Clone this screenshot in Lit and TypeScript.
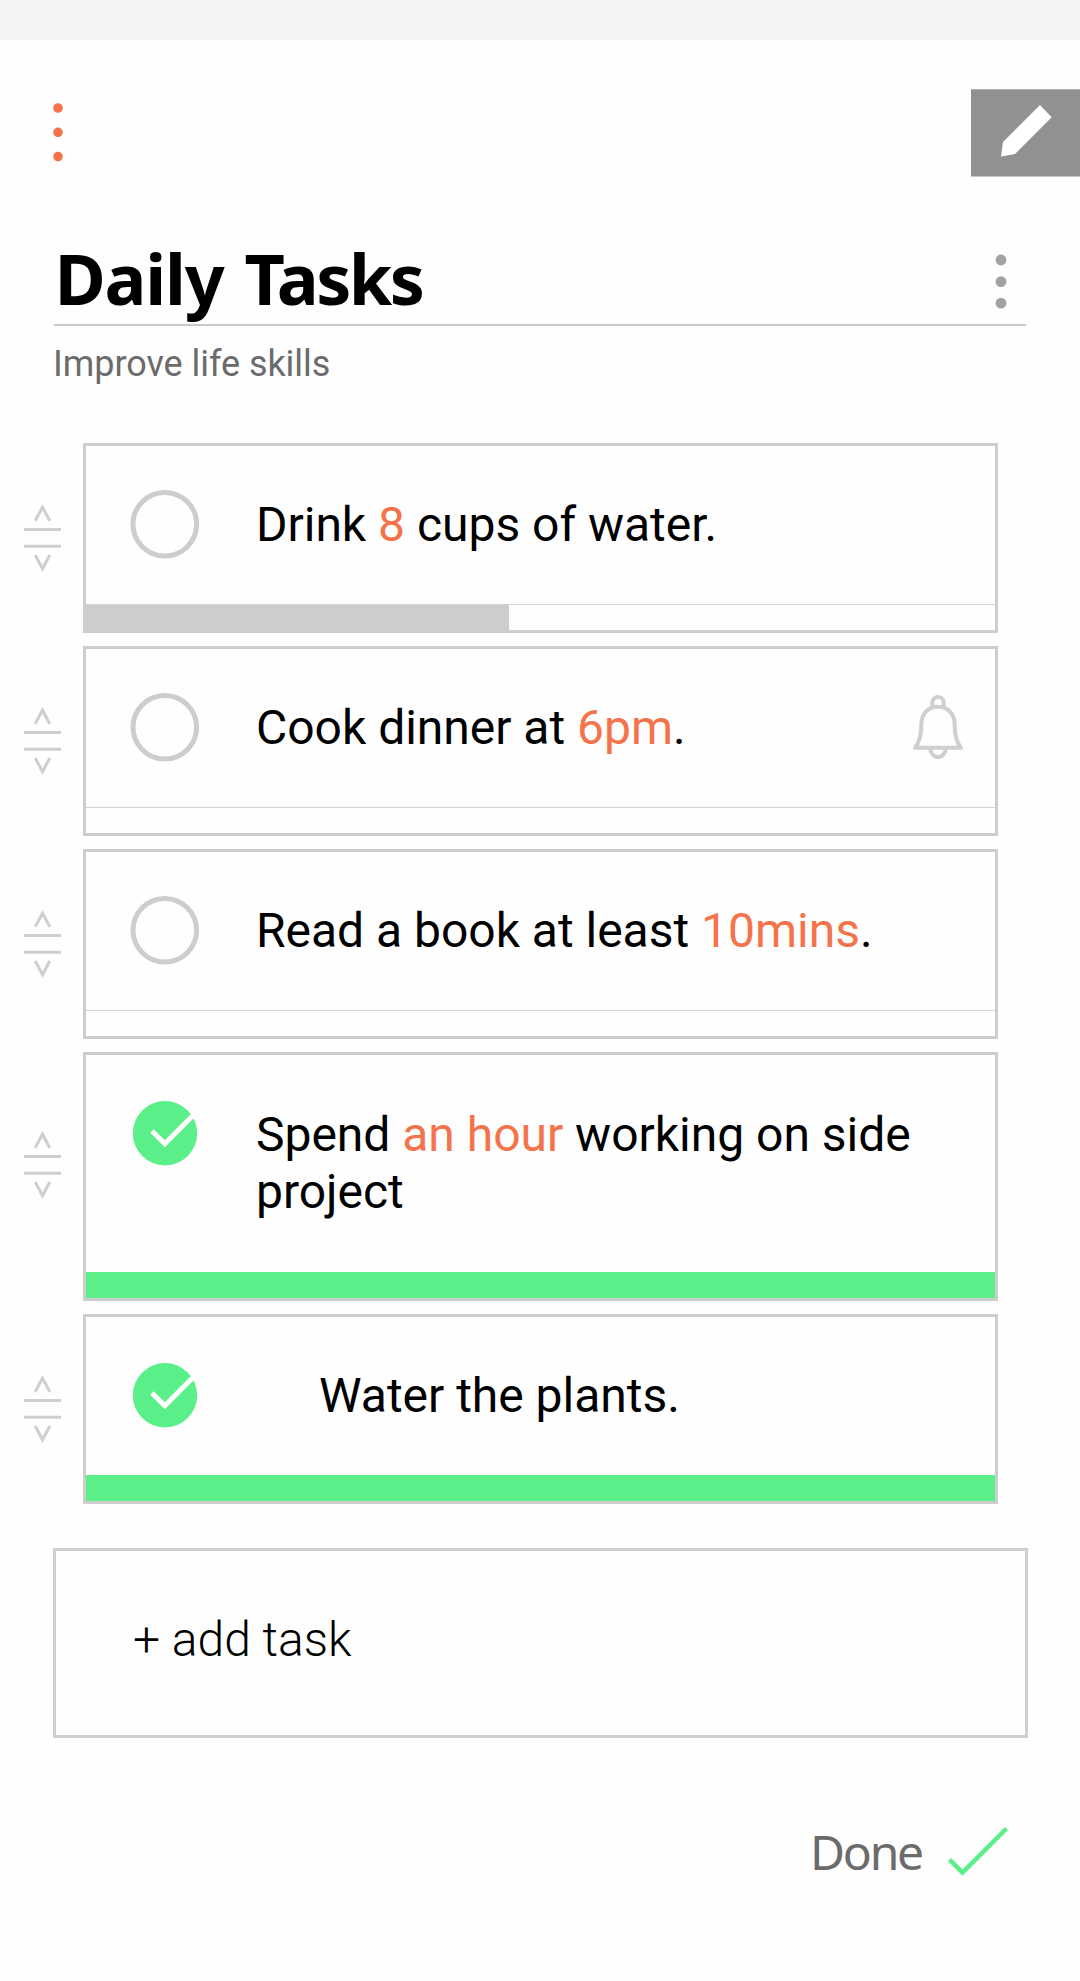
import { LitElement, html, svg, css, nothing } from "lit";
import { customElement } from "lit/decorators.js";
import { classMap } from "lit/directives/class-map.js";

interface Task {
  before: string;
  mark?: string;
  after?: string;
  second?: string;
  progress: number;
  done?: boolean;
  bell?: boolean;
  kind?: string;
}

const tasks: Task[] = [
  { before: "Drink ", mark: "8", after: " cups of water.", progress: 46.5, kind: "t1" },
  { before: "Cook dinner at ", mark: "6pm", after: ".", progress: 0, bell: true, kind: "t2" },
  { before: "Read a book at least ", mark: "10mins", after: ".", progress: 0, kind: "t3" },
  { before: "Spend ", mark: "an hour", after: " working on side", second: "project", progress: 100, done: true, kind: "t4" },
  { before: "Water the plants.", progress: 100, done: true, kind: "t5" },
];

const dots = (cls: string, r: number, step: number) => html`<svg class=${cls} width="12" height=${step * 2 + 12} viewBox="0 0 12 ${step * 2 + 12}">
  ${[0, 1, 2].map((i) => svg`<circle cx="6" cy=${6 + i * step} r=${r} fill="currentColor" />`)}
</svg>`;

const handle = html`<svg class="handle" width="38" height="70" viewBox="0 0 38 70" fill="none" stroke="#cfcfcf" stroke-width="3">
  <path d="M11.2 17.8 18.5 4.200 25.8 17.8M0 26.5H37M0 43.3H37M11.2 52 18.5 65.800 25.8 52" />
</svg>`;

const ring = html`<svg class="state" width="70" height="70" viewBox="0 0 70 70" fill="none">
  <circle cx="34.8" cy="35.2" r="31.8" stroke="#cdcdcd" stroke-width="5" />
</svg>`;

const ticked = html`<svg class="state" width="70" height="70" viewBox="0 0 70 70" fill="none">
  <circle cx="35" cy="35.2" r="32.2" fill="#5aef88" />
  <path d="M22 33 34.8 45.8 63.5 17" stroke="#fff" stroke-width="5" />
</svg>`;

const bell = html`<svg class="bell" width="52" height="68" viewBox="0 0 52 68" fill="none" stroke="#cfcfcf" stroke-width="4" stroke-linejoin="round">
  <path d="M26 14.8C16 14.8 9.400 22 9.400 32C9.400 42 8 50 3 55.700H49C44 50 42.600 42 42.600 32C42.600 22 36 14.800 26 14.800Z" />
  <path d="M20.300 16V10.700A5.700 5.700 0 0 1 31.700 10.700V16M18.300 56A7.700 9 0 0 0 33.700 56" />
</svg>`;

@customElement("app-root")
export class AppRoot extends LitElement {
  static styles = css`
    :host { display: block; }
    * { box-sizing: border-box; }
    svg { display: block; flex: none; }
    .page { height: 1981px; overflow: hidden; background: #fefefe; color: #000; font-family: Roboto, sans-serif; }
    .status { height: 40px; background: #f3f3f3; }
    .bar { display: flex; justify-content: space-between; padding: 49px 0 0 52px; height: 137px; }
    .menu { color: #f4734a; margin-top: 13.2px; }
    .edit { width: 109px; height: 88px; }
    .head { display: flex; justify-content: space-between; margin: 59px 54px 0; width: 972px; height: 90px; border-bottom: 2px solid #c8c8c8; }
    .title { display: flex; gap: 21px; margin: -2px 0 0; padding-left: 0.5px; font: 700 70px/88px "Noto Sans", sans-serif; letter-spacing: -1.2px; white-space: nowrap; }
    .tight { letter-spacing: -2.5px; }
    .more { color: #a2a2a2; margin: 18px 19px 0 0; }
    .sub { margin: 15px 0 0 53px; font-size: 36px; line-height: 46px; letter-spacing: -0.05px; color: #6b6b6b; }
    .list { display: flex; flex-direction: column; gap: 13px; margin-top: 56px; padding-left: 24px; }
    .row { display: flex; align-items: center; gap: 21px; }
    .tall .handle { margin-bottom: 23px; }
    .card { display: flex; flex-direction: column; width: 915px; height: 190px; border: 3px solid #cdcdcd; }
    .tall .card { height: 249px; }
    .body { display: flex; flex: 1; padding: 43px 31px 0 44px; }
    .label { flex: 1; margin-left: 56px; margin-top: 7px; font-size: 48px; line-height: 57px; letter-spacing: -0.02px; }
    .t4 { margin-top: 8px; }
    .t5 { padding-left: 63px; }
    .mark { color: #f4734a; }
    .second { display: block; }
    .bell { margin-top: 0.3px; }
    .track { height: 26px; border-top: 1px solid #d4d4d4; }
    .fill { height: 25px; background: #cdcdcd; }
    .full .track { border: 0; }
    .full .fill { background: #5aef88; height: 26px; }
    .add { display: flex; align-items: center; margin: 44px 0 0 53px; width: 975px; height: 190px; padding: 0 0 8px 77px; border: 3px solid #cfcfcf; font-size: 48px; font-weight: 300; }
    .done { display: flex; align-items: flex-start; justify-content: flex-end; padding: 81px 70px 0 0; font: 48px/65px "Noto Sans", sans-serif; letter-spacing: -2.2px; color: #6b6b6b; }
    .tick { margin: 7px 0 0 26px; }
  `;

  render() {
    return html`<div class="page">
      <div class="status"></div>
      <div class="bar">
        ${dots("menu", 4.8, 24.3)}
        <svg class="edit" viewBox="0 0 109 88"><rect y="0.300" width="109" height="87.200" fill="#919191" /><path d="M69 16 80.700 28.300 44 65 30 67.500 32 53Z" fill="#fff" /></svg>
      </div>
      <div class="head">
        <h1 class="title"><span>Daily</span> <span class="tight">Tasks</span></h1>
        ${dots("more", 5.4, 21.6)}
      </div>
      <div class="sub">Improve life skills</div>
      <div class="list">
        ${tasks.map((t) => html`<div class=${classMap({ row: true, full: !!t.done, tall: !!t.second })}>
          ${handle}
          <div class="card">
            <div class="body">
              ${t.done ? ticked : ring}
              <div class="label ${t.kind}">${t.before}<span class="mark">${t.mark ?? nothing}</span>${t.after ?? nothing}${t.second ? html`<span class="second">${t.second}</span>` : nothing}</div>
              ${t.bell ? bell : nothing}
            </div>
            <div class="track"><div class="fill" style="width:${t.progress}%"></div></div>
          </div>
        </div>`)}
      </div>
      <div class="add">+ add task</div>
      <div class="done">Done
        <svg class="tick" width="62" height="50" viewBox="0 0 62 50" fill="none" stroke="#5aef88" stroke-width="4.500"><path d="M1.500 33.500 14.500 46.500 58.500 2.500" /></svg>
      </div>
    </div>`;
  }
}
